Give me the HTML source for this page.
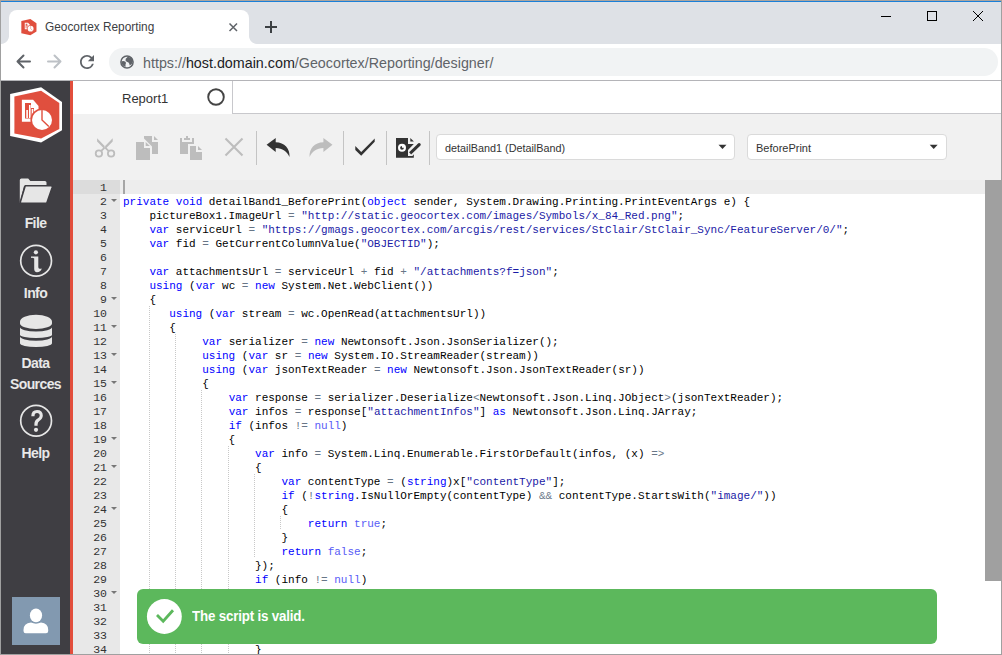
<!DOCTYPE html>
<html><head><meta charset="utf-8">
<style>
*{margin:0;padding:0;box-sizing:border-box}
html,body{width:1002px;height:655px;overflow:hidden;background:#fff;font-family:"Liberation Sans",sans-serif}
.a{position:absolute}
svg.a{overflow:visible}
#code{position:absolute;left:123px;top:181px;font-family:"Liberation Mono",monospace;font-size:11px;line-height:14px;color:#000}
#code div{height:14px;white-space:pre}
#gut{position:absolute;left:73px;top:180px;width:47px;height:474px;background:#e8e8e8;font-family:"Liberation Mono",monospace;font-size:11.5px;line-height:14px;color:#333}
#gut div{height:14px;text-align:right;padding-right:13px;position:relative;top:1px}
.k{color:#0000ff}
.s{color:#1a1aa6}
.o{color:#687687}
.c{color:#585cf6}
.g{position:absolute;width:1px;background:repeating-linear-gradient(#c8c8c8 0 1px,transparent 1px 2px)}
.f:after{content:"";position:absolute;left:38px;top:4px;border-left:3px solid transparent;border-right:3px solid transparent;border-top:3.5px solid #777}
.lbl{position:absolute;left:1px;width:69px;text-align:center;color:#e8e8e8;font-weight:bold;font-size:14px;letter-spacing:-0.6px;line-height:21px}
</style></head><body>
<svg width="0" height="0" style="position:absolute">
<defs>
<g id="logo">
<polygon points="4.4,9.6 31.1,3.7 49.3,16 49.3,42 31.1,51.5 4.4,46.4" fill="#e04f3e"/>
<path d="M11.9 12.8H23.1L28.5 18.9V34.7H11.9Z" fill="#fff"/>
<path d="M15 16H21V21H24V31.5H15Z" fill="#e04f3e"/>
<rect x="16.3" y="23" width="1.6" height="8" fill="#fff"/>
<rect x="19" y="18" width="1.6" height="13" fill="#fff"/>
<rect x="21.7" y="22" width="1.6" height="9" fill="#fff"/>
<circle cx="32" cy="33" r="11.6" fill="#e04f3e"/>
<circle cx="32" cy="33" r="10" fill="#fff"/>
<path d="M32 23V33L38.8 39.6" fill="none" stroke="#e04f3e" stroke-width="1.4"/>
</g>
</defs>
</svg>
<!-- window borders -->
<div class="a" style="left:0;top:0;width:1002px;height:44px;background:#dee1e6"></div>
<div class="a" style="left:0;top:0;width:1002px;height:1px;background:#aaa49e"></div>
<div class="a" style="left:1px;top:1px;width:1000px;height:1px;background:#1a7fd8"></div>
<!-- chrome tab -->
<div class="a" style="left:0;top:44px;width:1002px;height:36px;background:#fff"></div>
<div class="a" style="left:0;top:80px;width:1002px;height:1px;background:#b4b4b8"></div>
<div class="a" style="left:9px;top:10px;width:240px;height:34px;background:#fff;border-radius:8px 8px 0 0"></div>
<div class="a" style="left:1px;top:36px;width:8px;height:8px;background:radial-gradient(circle at 0 0,#dee1e6 7.5px,#fff 8.3px)"></div>
<div class="a" style="left:249px;top:36px;width:8px;height:8px;background:radial-gradient(circle at 100% 0,#dee1e6 7.5px,#fff 8.3px)"></div>
<svg class="a" style="left:0;top:0" width="1002" height="80">
<g transform="translate(21.3,19) scale(0.292)">
<polygon points="0.1,6.9 31.1,0.3 52,14.9 52,43.2 31.1,55.5 0.1,49.1" fill="#e04f3e"/>
<use href="#logo"/>
</g>
<path d="M229.5 23.5L237 31M237 23.5L229.5 31" stroke="#5f6368" stroke-width="1.5"/>
<path d="M271 21V33M265 27H277" stroke="#3c4043" stroke-width="2"/>
<path d="M881 16.5H891" stroke="#000" stroke-width="1"/>
<rect x="927.5" y="11.5" width="9" height="9" fill="none" stroke="#000" stroke-width="1"/>
<path d="M973 11L983 21M983 11L973 21" stroke="#000" stroke-width="1"/>
<path d="M30 61.5H17.5M23.5 55.5L17.5 61.5L23.5 67.5" fill="none" stroke="#5f6368" stroke-width="2" stroke-linecap="round" stroke-linejoin="round"/>
<path d="M48 61.5H60.5M54.5 55.5L60.5 61.5L54.5 67.5" fill="none" stroke="#bdc1c6" stroke-width="2" stroke-linecap="round" stroke-linejoin="round"/>
<g transform="translate(76.5,51.5) scale(0.875)"><path d="M17.65 6.35A7.958 7.958 0 0 0 12 4c-4.42 0-7.99 3.58-7.99 8s3.57 8 7.99 8c3.73 0 6.84-2.55 7.730-6h-2.08A5.990 5.990 0 0 1 12 18c-3.310 0-6-2.690-6-6s2.690-6 6-6c1.660 0 3.140.690 4.220 1.780L13 11h7V4l-2.350 2.350z" fill="#5f6368"/></g>
</svg>
<div class="a" style="left:109px;top:48px;width:889px;height:28px;background:#f1f3f4;border-radius:14px"></div>
<svg class="a" style="left:0;top:0" width="300" height="80">
<circle cx="127" cy="62" r="6.1" fill="none" stroke="#5f6368" stroke-width="1.5"/>
<path d="M127.5 57Q125 58.5 125.5 60.5Q126.5 62 128.5 62.5Q129.5 63.5 129.7 65.5Q132.5 64 133 61V59.5Q131 56.5 127.5 57Z" fill="#5f6368"/>
<path d="M121.2 61.5Q123.5 60.5 125.5 61.8Q126.5 63 125.5 64.5V67Q122 66 121.2 61.5Z" fill="#5f6368"/>
</svg>
<div class="a" style="left:45px;top:18px;font-size:11.85px;color:#3c4043;line-height:18px">Geocortex Reporting</div>
<div class="a" style="left:143px;top:53px;font-size:14.3px;line-height:20px;color:#5f6368">https://<span style="color:#202124">host.domain.com</span>/Geocortex/Reporting/designer/</div>

<!-- sidebar -->
<div class="a" style="left:1px;top:81px;width:69px;height:573px;background:#3f3e43"></div>
<div class="a" style="left:70px;top:81px;width:3px;height:573px;background:#e24e3c"></div>
<svg class="a" style="left:0;top:81px" width="73" height="573">
<g transform="translate(10,6)">
<polygon points="0.1,6.9 31.1,0.3 52,14.9 52,43.2 31.1,55.5 0.1,49.1" fill="#fff"/>
<use href="#logo"/>
</g>
</svg>
<svg class="a" style="left:0;top:0" width="73" height="655">
<!-- folder -->
<path d="M19.8 180A1.6 1.6 0 0 1 21.4 178.4H28.2L30.3 181H44.9A1.6 1.6 0 0 1 46.5 182.6V186H24L19.8 203Z" fill="#e6e6e6"/>
<path d="M25.2 185.8H51.2A1.2 1.2 0 0 1 52.3 187.3L47 202.4A1.2 1.2 0 0 1 45.9 203.2H21.3A1 1 0 0 1 20.3 202Z" fill="#e6e6e6" stroke="#3e3d42" stroke-width="1.6" stroke-linejoin="round"/>
<!-- info -->
<circle cx="36.1" cy="260.8" r="15.4" fill="none" stroke="#e6e6e6" stroke-width="1.7"/>
<circle cx="35.9" cy="252.3" r="2.1" fill="#e6e6e6"/>
<path d="M31 256.4H38.3V267.2Q38.6 269.6 41.8 268.4Q40.6 272.2 37 272.2Q34.2 272.2 34.2 268.8V258.6Q33.2 257.6 31 257.9Z" fill="#e6e6e6"/>
<!-- database -->
<path d="M20 321.8A16 7 0 0 1 52 321.8V323.6A16 5.3 0 0 1 20 323.6Z M20 327.3A16 4.2 0 0 0 52 327.3V334.7A16 3.2 0 0 1 20 334.7Z M20 336.6A16 4.2 0 0 0 52 336.6V343.3A16 3.7 0 0 1 20 343.3Z" fill="#e6e6e6"/>
<!-- help -->
<circle cx="36.1" cy="420.8" r="15.4" fill="none" stroke="#e6e6e6" stroke-width="1.7"/>
<path d="M31.3 416.3Q31.3 410 37 410Q42.8 410 42.8 415.6Q42.8 419 39.4 421Q37.6 422.2 37.6 424.4V425.8H34.4V424Q34.4 420.4 37.6 418.6Q39.7 417.4 39.7 415.6Q39.7 413.1 37 413.1Q34.5 413.1 34.5 416.3Z" fill="#e6e6e6"/>
<circle cx="36" cy="429.8" r="2.1" fill="#e6e6e6"/>
<!-- avatar -->
<rect x="12" y="597" width="48" height="48" fill="#8299b0"/>
<ellipse cx="36" cy="615.4" rx="6.1" ry="6.8" fill="#fff"/>
<path d="M23.5 630Q23.5 623 31 622.5Q36 624.8 41 622.5Q48.2 623 48.2 630V631Q48.2 633.2 46 633.2H25.7Q23.5 633.2 23.5 631Z" fill="#fff"/>
</svg>
<div class="lbl" style="top:213px">File</div>
<div class="lbl" style="top:283px">Info</div>
<div class="lbl" style="top:353px">Data<br>Sources</div>
<div class="lbl" style="top:443px">Help</div>

<!-- app tab row -->
<div class="a" style="left:73px;top:81px;width:928px;height:33px;background:#fff"></div>
<div class="a" style="left:232px;top:81px;width:769px;height:33px;border-left:1px solid #c8c8cc;border-bottom:1px solid #c8c8cc"></div>
<div class="a" style="left:122px;top:90px;font-size:13px;line-height:18px;color:#333">Report1</div>
<!-- toolbar -->
<div class="a" style="left:73px;top:114px;width:928px;height:66px;background:#f1f1f1"></div>
<div class="a" style="left:436px;top:134px;width:299px;height:26px;background:#fff;border:1px solid #dadada;border-radius:4px"></div>
<div class="a" style="left:747px;top:134px;width:200px;height:26px;background:#fff;border:1px solid #dadada;border-radius:4px"></div>
<div class="a" style="left:445px;top:141px;font-size:10.8px;line-height:14px;color:#333">detailBand1 (DetailBand)</div>
<div class="a" style="left:756px;top:141px;font-size:11px;line-height:14px;color:#333">BeforePrint</div>
<svg class="a" style="left:0;top:0" width="1002" height="180">
<circle cx="216" cy="97" r="7.8" fill="none" stroke="#444" stroke-width="1.9"/>
<!-- scissors -->
<path d="M97.1 138.2L105.4 146.8L104.2 148.8L97.1 141.6Z M112.7 138.2L104.4 146.8L105.6 148.8L112.7 141.6Z" fill="#bdbdbd"/>
<path d="M101 151.2L104.4 147.8M108.8 151.2L105.4 147.8" stroke="#bdbdbd" stroke-width="1.8"/>
<circle cx="98.9" cy="153.5" r="3.2" fill="none" stroke="#bdbdbd" stroke-width="1.8"/>
<circle cx="111.1" cy="153.5" r="3.2" fill="none" stroke="#bdbdbd" stroke-width="1.8"/>
<!-- copy -->
<path d="M144 136H152V142H158V154H152V146.5L144 138.5Z M154 136L158 140H154Z" fill="#bdbdbd"/>
<path d="M136 142H144V148H150V160H136Z M145.7 142L149.9 146H145.7Z" fill="#bdbdbd"/>
<!-- paste -->
<path d="M180 138H182V142H192V138H194V144H188V154H180Z M184 138H190V140H184Z M186 136H188V138H186Z" fill="#bdbdbd"/>
<path d="M190 146H196V152H202V160H190Z M198 146L202 150H198Z" fill="#bdbdbd"/>
<!-- delete x -->
<path d="M225.5 138.5L242.5 155.5M242.5 138.5L225.5 155.5" stroke="#bdbdbd" stroke-width="2.1"/>
<!-- separators -->
<path d="M256.5 131V165M343.5 131V165M386.5 131V165M429.5 131V165" stroke="#c4c4c4" stroke-width="1"/>
<!-- undo -->
<path d="M266.6 144.8L275.7 138V142.3C284.5 142.3 290.2 149 289.5 157C287 151.5 282.5 148 275.7 148V151.9Z" fill="#333"/>
<!-- redo -->
<path d="M332.5 144.8L323.4 138V142.3C314.6 142.3 308.9 149 309.6 157C312.1 151.5 316.6 148 323.4 148V151.9Z" fill="#bdbdbd"/>
<!-- check -->
<polygon points="355.3,146 361.2,151.9 374.7,138.4 374.7,141.8 361.2,155.8 355.3,149.9" fill="#333"/>
<!-- doc edit -->
<path d="M396 138H408V144.1H413.8L408 150V156H412.4L413.8 154.3V157.7H396Z" fill="#333"/>
<path d="M410.3 138L413.9 141.6H410.3Z" fill="#333"/>
<path d="M410.1 153.3L419.2 144.6" stroke="#333" stroke-width="3"/>
<circle cx="419.2" cy="144.6" r="1.5" fill="#333"/>
<circle cx="402" cy="147.8" r="4" fill="#fff"/>
<path d="M402 147.8V145.9A1.9 1.9 0 1 0 403.9 147.8Z" fill="#333"/>
<!-- dropdown arrows -->
<path d="M718.5 144.8H726.5L722.5 149Z" fill="#333"/>
<path d="M929.7 144.8H937.7L933.7 149Z" fill="#333"/>
</svg>

<!-- editor -->
<div class="a" style="left:73px;top:180px;width:912px;height:474px;background:#fff"></div>
<div class="a" style="left:120px;top:180px;width:865px;height:14px;background:#ededed"></div>
<div id="gut">
<div>1</div>
<div class="f">2</div>
<div>3</div>
<div>4</div>
<div>5</div>
<div>6</div>
<div>7</div>
<div>8</div>
<div class="f">9</div>
<div>10</div>
<div class="f">11</div>
<div>12</div>
<div class="f">13</div>
<div>14</div>
<div class="f">15</div>
<div>16</div>
<div>17</div>
<div>18</div>
<div class="f">19</div>
<div>20</div>
<div class="f">21</div>
<div>22</div>
<div>23</div>
<div class="f">24</div>
<div>25</div>
<div>26</div>
<div>27</div>
<div>28</div>
<div>29</div>
<div class="f">30</div>
<div>31</div>
<div>32</div>
<div>33</div>
<div>34</div>
</div>
<div class="a" style="left:73px;top:180px;width:47px;height:14px;background:#dcdcdc"></div>
<div class="a" style="left:73px;top:181px;width:34px;height:14px;font-family:'Liberation Mono',monospace;font-size:11.5px;line-height:14px;color:#333;text-align:right">1</div>
<div class="a" style="left:123px;top:180px;width:2px;height:14px;background:#a6a6a6"></div>
<div class="g" style="left:149px;top:306px;height:350px"></div>
<div class="g" style="left:175px;top:334px;height:322px"></div>
<div class="g" style="left:201px;top:390px;height:266px"></div>
<div class="g" style="left:228px;top:446px;height:210px"></div>
<div class="g" style="left:254px;top:474px;height:84px"></div>
<div class="g" style="left:254px;top:600px;height:42px"></div>
<div class="g" style="left:280px;top:516px;height:14px"></div>
<div id="code">
<div></div>
<div><span class="k">private</span> <span class="k">void</span> detailBand1_BeforePrint(<span class="k">object</span> sender, System.Drawing.Printing.PrintEventArgs e) {</div>
<div>    pictureBox1.ImageUrl <span class="o">=</span> <span class="s">&quot;http://static.geocortex.com/images/Symbols/x_84_Red.png&quot;</span>;</div>
<div>    <span class="k">var</span> serviceUrl <span class="o">=</span> <span class="s">&quot;https://gmags.geocortex.com/arcgis/rest/services/StClair/StClair_Sync/FeatureServer/0/&quot;</span>;</div>
<div>    <span class="k">var</span> fid <span class="o">=</span> GetCurrentColumnValue(<span class="s">&quot;OBJECTID&quot;</span>);</div>
<div></div>
<div>    <span class="k">var</span> attachmentsUrl <span class="o">=</span> serviceUrl <span class="o">+</span> fid <span class="o">+</span> <span class="s">&quot;/attachments?f=json&quot;</span>;</div>
<div>    <span class="k">using</span> (<span class="k">var</span> wc <span class="o">=</span> <span class="k">new</span> System.Net.WebClient())</div>
<div>    {</div>
<div>       <span class="k">using</span> (<span class="k">var</span> stream <span class="o">=</span> wc.OpenRead(attachmentsUrl))</div>
<div>       {</div>
<div>            <span class="k">var</span> serializer <span class="o">=</span> <span class="k">new</span> Newtonsoft.Json.JsonSerializer();</div>
<div>            <span class="k">using</span> (<span class="k">var</span> sr <span class="o">=</span> <span class="k">new</span> System.IO.StreamReader(stream))</div>
<div>            <span class="k">using</span> (<span class="k">var</span> jsonTextReader <span class="o">=</span> <span class="k">new</span> Newtonsoft.Json.JsonTextReader(sr))</div>
<div>            {</div>
<div>                <span class="k">var</span> response <span class="o">=</span> serializer.Deserialize<span class="o">&lt;</span>Newtonsoft.Json.Linq.JObject<span class="o">&gt;</span>(jsonTextReader);</div>
<div>                <span class="k">var</span> infos <span class="o">=</span> response[<span class="s">&quot;attachmentInfos&quot;</span>] <span class="k">as</span> Newtonsoft.Json.Linq.JArray;</div>
<div>                <span class="k">if</span> (infos <span class="o">!=</span> <span class="c">null</span>)</div>
<div>                {</div>
<div>                    <span class="k">var</span> info <span class="o">=</span> System.Linq.Enumerable.FirstOrDefault(infos, (x) <span class="o">=&gt;</span></div>
<div>                    {</div>
<div>                        <span class="k">var</span> contentType <span class="o">=</span> (<span class="k">string</span>)x[<span class="s">&quot;contentType&quot;</span>];</div>
<div>                        <span class="k">if</span> (<span class="o">!</span><span class="k">string</span>.IsNullOrEmpty(contentType) <span class="o">&amp;&amp;</span> contentType.StartsWith(<span class="s">&quot;image/&quot;</span>))</div>
<div>                        {</div>
<div>                            <span class="k">return</span> <span class="c">true</span>;</div>
<div>                        }</div>
<div>                        <span class="k">return</span> <span class="c">false</span>;</div>
<div>                    });</div>
<div>                    <span class="k">if</span> (info <span class="o">!=</span> <span class="c">null</span>)</div>
<div>                    {</div>
<div>                        <span class="k">var</span> attachment <span class="o">=</span> info[<span class="s">&quot;id&quot;</span>];</div>
<div>                        pictureBox1.ImageUrl <span class="o">=</span> attachmentsUrl;</div>
<div>                        <span class="k">return</span>;</div>
<div>                    }</div>
</div>
<div class="a" style="left:985px;top:180px;width:16px;height:401px;background:#a0a0a0"></div>

<!-- toast -->
<div class="a" style="left:137px;top:589px;width:800px;height:55px;background:#5cb85c;border-radius:6px"></div>
<svg class="a" style="left:0;top:0" width="1002" height="655">
<circle cx="164.35" cy="616.5" r="17.45" fill="#fff"/>
<path d="M157 614.9L163.2 621.2L173 610.2" fill="none" stroke="#5cb85c" stroke-width="2.8"/>
</svg>
<div class="a" style="left:192px;top:607px;font-size:14.5px;letter-spacing:-0.2px;transform:scaleX(0.92);transform-origin:0 0;line-height:18px;color:#fff;font-weight:bold">The script is valid.</div>

<!-- bottom/right borders -->
<div class="a" style="left:0;top:1px;width:1px;height:654px;background:#a0a0a0"></div>
<div class="a" style="left:1001px;top:1px;width:1px;height:654px;background:#a0a0a0"></div>
<div class="a" style="left:0;top:654px;width:1002px;height:1px;background:#a0a0a0"></div>
</body></html>
